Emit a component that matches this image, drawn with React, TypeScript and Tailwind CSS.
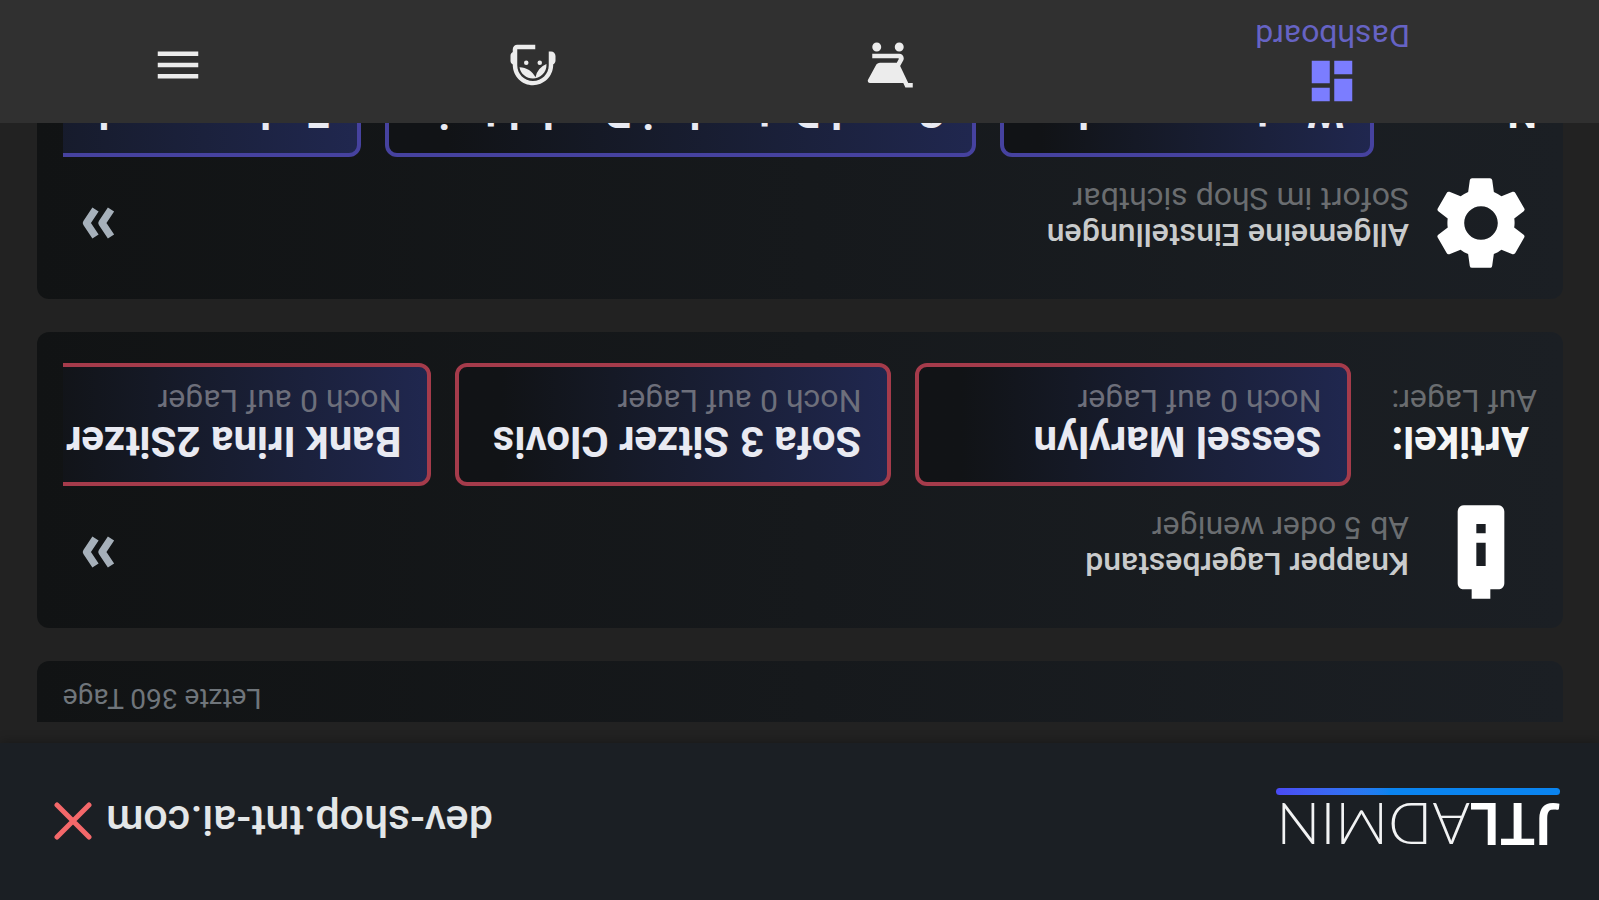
import type { ReactNode } from "react";
import {
  MdBatteryAlert,
  MdDashboard,
  MdMenu,
  MdSettings,
  MdShoppingCart,
  MdSupportAgent,
} from "react-icons/md";

const articles = [
  { title: "Sessel Marylyn", stock: "Noch 0 auf Lager" },
  { title: "Sofa 3 Sitzer Clovis", stock: "Noch 0 auf Lager" },
  { title: "Bank Irina 2Sitzer", stock: "Noch 0 auf Lager" },
];

const settings = [
  { title: "Wartungsmodus", value: "Aus" },
  { title: "Grund Daten bei Produkt ein", value: "An" },
  { title: "Endsumme laut Rechnung", value: "An" },
];

const navItems = [
  { name: "Bestellungen", Icon: MdShoppingCart },
  { name: "Support", Icon: MdSupportAgent },
  { name: "Menü", Icon: MdMenu },
];

function DoubleArrow() {
  return (
    <svg viewBox="0 0 34 32" className="h-8 w-[34px]" fill="none" stroke="#a6b0ba" strokeWidth="7.500">
      <path d="M4 2.500 L13 16 L4 29.500" strokeLinejoin="round" />
      <path d="M19.500 2.500 L28.500 16 L19.500 29.500" strokeLinejoin="round" />
    </svg>
  );
}

function Chip({ title, sub, className }: { title: string; sub: string; className: string }) {
  return (
    <div
      className={`shrink-0 rounded-xl border-4 bg-linear-to-r from-[#20274f] to-[#111316] to-90% px-[26px] pt-[19px] pb-4 whitespace-nowrap ${className}`}
    >
      <p className="text-[42px] leading-[44px] font-bold text-[#e9eaf2]">{title}</p>
      <p className="text-[32px] leading-[36px] text-[#6d6f7b]">{sub}</p>
    </div>
  );
}

type PanelProps = {
  icon: ReactNode;
  title: string;
  subtitle: string;
  label: string;
  subLabel: string;
  children: ReactNode;
};

function Panel({ icon, title, subtitle, label, subLabel, children }: PanelProps) {
  return (
    <section className="shrink-0 rounded-xl bg-linear-to-r from-[#1b1f24] to-[#111314] px-[26px] pt-5 pb-[31px]">
      <div className="flex items-center">
        <div className="text-[112px] text-white">{icon}</div>
        <div className="ml-4 flex-1 pt-3">
          <h2 className="text-[32px] leading-[36px] font-medium text-[#c9cbcc]">{title}</h2>
          <p className="text-[32px] leading-[36px] text-[#6a6d70]">{subtitle}</p>
        </div>
        <button type="button" aria-label={`${title} öffnen`} className="mr-[18px]">
          <DoubleArrow />
        </button>
      </div>
      <div className="mt-2.5 flex overflow-hidden">
        <div className="shrink-0 pt-[23px] pr-10 text-right whitespace-nowrap">
          <p className="text-[42px] leading-[44px] font-bold text-[#f4f5f5]">{label}</p>
          <p className="text-[32px] leading-[36px] text-[#6a6d70]">{subLabel}</p>
        </div>
        <div className="flex gap-6">{children}</div>
      </div>
    </section>
  );
}

export default function App() {
  return (
    <div className="flex h-screen rotate-180 flex-col overflow-hidden bg-[#222222] font-['Roboto','Liberation_Sans',sans-serif]">
      {/* Header */}
      <header className="flex h-[157px] shrink-0 items-center justify-between bg-[#1b1f24] pr-[54px] pl-[39px] shadow-[0_2px_10px_rgba(0,0,0,0.25)]">
        <div>
          <div className="font-['Lato',sans-serif] text-[58px] leading-[60px] font-light text-[#f2f3f4]">
            <span className="font-bold text-white">JTL</span>ADMIN
          </div>
          <div className="h-[7px] rounded-full bg-linear-to-r from-[#0a84f0] from-60% to-[#4a4af5]" />
        </div>
        <div className="flex items-center gap-[14px]">
          <a href="#shop" className="text-[43px] leading-[48px] font-medium text-[#e3e6e8]">
            dev-shop.tnt-ai.com
          </a>
          <button type="button" aria-label="Schließen">
            <svg viewBox="0 0 38 38" className="size-[38px]" stroke="#f4686a" strokeWidth="5" strokeLinecap="round">
              <path d="M3 3 L35 35 M35 3 L3 35" />
            </svg>
          </button>
        </div>
      </header>

      {/* Scrolled content */}
      <main className="mt-[21px] mr-[37px] ml-9 flex min-h-0 flex-1 flex-col gap-[33px] overflow-hidden">
        <section className="h-[61px] shrink-0 rounded-b-xl bg-linear-to-r from-[#1b1f24] to-[#111314] px-[26px] pt-2 text-right">
          <p className="text-[28px] leading-[32px] text-[#6f757b]">Letzte 360 Tage</p>
        </section>

        <Panel
          icon={<MdBatteryAlert />}
          title="Knapper Lagerbestand"
          subtitle="Ab 5 oder weniger"
          label="Artikel:"
          subLabel="Auf Lager:"
        >
          {articles.map((a) => (
            <Chip key={a.title} title={a.title} sub={a.stock} className="min-w-[436px] border-[#a53b4b]" />
          ))}
        </Panel>

        <Panel
          icon={<MdSettings />}
          title="Allgemeine Einstellungen"
          subtitle="Sofort im Shop sichtbar"
          label="Name:"
          subLabel="Wert:"
        >
          {settings.map((s) => (
            <Chip key={s.title} title={s.title} sub={s.value} className="min-w-[374px] border-[#46429f]" />
          ))}
        </Panel>
      </main>

      {/* Bottom navigation */}
      <nav className="flex h-[123px] shrink-0 items-center bg-[#303030] pb-1">
        <a href="#dashboard" className="flex flex-3 flex-col items-center">
          <MdDashboard className="size-[54px] text-[#7b7dff]" />
          <span className="text-[32px] leading-[36px] text-[#6663c4]">Dashboard</span>
        </a>
        {navItems.map(({ name, Icon }) => (
          <a key={name} href={`#${name}`} aria-label={name} className="flex flex-2 justify-center pb-1">
            <Icon className="size-[54px] text-[#ececec]" />
          </a>
        ))}
      </nav>
    </div>
  );
}
